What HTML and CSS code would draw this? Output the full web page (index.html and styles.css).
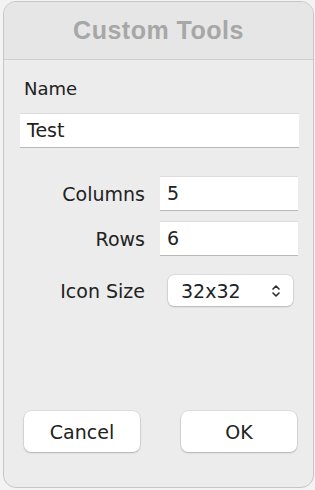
FILE: index.html
```html
<!DOCTYPE html>
<html>
  <head>
    <title>Custom Tools</title>
    <link rel="stylesheet" href="styles.css">
  </head>
  <body>
    <div class="window">
      <div class="titlebar">Custom Tools</div>
      <div class="content">
        <div class="name-label">Name</div>
        <div class="field name-field">Test</div>
        <div class="form-grid">
          <div class="label">Columns</div>
          <div class="field">5</div>
          <div class="label">Rows</div>
          <div class="field">6</div>
          <div class="label label-select">Icon Size</div>
          <div class="select">
            <span>32x32</span>
            <svg class="chevrons" width="8" height="14" viewBox="0 0 8 14">
              <path d="M1 5 L4 2 L7 5" fill="none" stroke="#2a2a2a" stroke-width="1.6" stroke-linecap="round" stroke-linejoin="round"/>
              <path d="M1 9 L4 12 L7 9" fill="none" stroke="#2a2a2a" stroke-width="1.6" stroke-linecap="round" stroke-linejoin="round"/>
            </svg>
          </div>
        </div>
        <div class="buttons">
          <button class="btn">Cancel</button>
          <button class="btn">OK</button>
        </div>
      </div>
    </div>
  </body>
</html>
```
FILE: styles.css
```css
body {
  margin: 0;
  background-color: #f3f3f3;
  font-family: "DejaVu Sans", sans-serif;
  color: #222;
}

.window {
  box-sizing: border-box;
  width: 311px;
  height: 487px;
  margin: 1px 0 0 3px;
  border: 1px solid #c6c6c6;
  border-radius: 13px;
  background-color: #ececec;
  display: flex;
  flex-direction: column;
  overflow: hidden;
}

.titlebar {
  height: 56px;
  border-bottom: 1px solid #cfcfcf;
  background-color: #e6e6e6;
  display: flex;
  justify-content: center;
  align-items: center;
  font-family: "Liberation Sans", Arial, sans-serif;
  font-weight: bold;
  font-size: 25px;
  letter-spacing: 0.5px;
  color: #a7a7a7;
  padding-bottom: 1px;
}

.content {
  flex: 1;
  display: flex;
  flex-direction: column;
  padding: 0 14px 35px 16px;
}

.name-label {
  font-size: 18px;
  margin: 17px 0 0 4px;
  line-height: 24px;
}

.field {
  box-sizing: border-box;
  height: 35px;
  background-color: #fff;
  border-top: 1px solid #dcdcdc;
  border-bottom: 1px solid #b9b9b9;
  font-size: 19px;
  line-height: 33px;
  padding-left: 7px;
}

.name-field {
  margin-top: 12px;
}

.form-grid {
  display: grid;
  grid-template-columns: 125px 138px;
  column-gap: 15px;
  row-gap: 10px;
  margin-top: 28px;
  align-items: center;
}

.label {
  text-align: right;
  font-size: 19px;
}

.label-select {
  margin-top: 9px;
}

.select {
  box-sizing: border-box;
  width: 125px;
  height: 31px;
  margin: 9px 0 0 8px;
  background-color: #fff;
  border-radius: 6px;
  box-shadow: 0 0 0 0.5px rgba(0, 0, 0, 0.12), 0 1px 2px rgba(0, 0, 0, 0.18);
  display: flex;
  align-items: center;
  justify-content: space-between;
  padding: 0 13px 0 13px;
  font-size: 19px;
}

.buttons {
  margin-top: auto;
  display: flex;
  justify-content: space-between;
  padding-left: 4px;
  padding-right: 2px;
}

.btn {
  width: 116px;
  height: 41px;
  border: none;
  border-radius: 7px;
  background-color: #fff;
  box-shadow: 0 0 0 0.5px rgba(0, 0, 0, 0.12), 0 1px 2px rgba(0, 0, 0, 0.2);
  font-family: "DejaVu Sans", sans-serif;
  font-size: 19px;
  color: #222;
  padding: 0;
}
```
